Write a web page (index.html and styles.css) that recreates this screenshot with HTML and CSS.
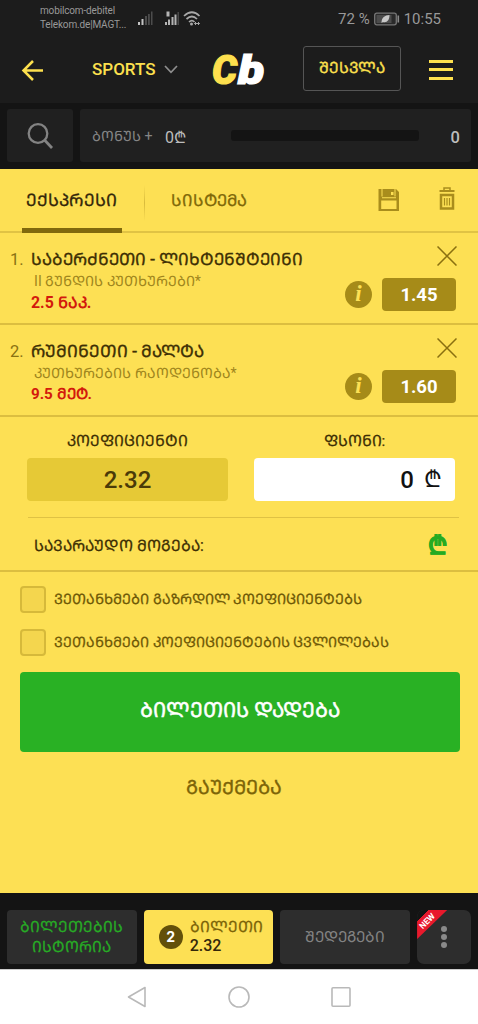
FILE: index.html
```html
<!DOCTYPE html>
<html lang="ka">
<head>
<meta charset="utf-8">
<title>Cb</title>
<link rel="stylesheet" href="styles.css">
</head>
<body>
<div class="status">
  <div class="carrier">mobilcom-debitel<br>Telekom.de|MAGT...</div>
  <svg class="signals" width="66" height="20" viewBox="0 0 66 20">
    <g fill="#c4c4c4"><rect x="1" y="13" width="2" height="3"/><rect x="4.500" y="10" width="2" height="6"/></g>
    <g fill="#4c4c4c"><rect x="8" y="7" width="2" height="9"/><rect x="11" y="5" width="1.800" height="11"/><rect x="14" y="2.500" width="1.500" height="13.500"/></g>
    <g fill="#b4b4b4"><rect x="28" y="13" width="2" height="3"/><rect x="31" y="10.500" width="2" height="5.500"/><rect x="34.500" y="8" width="2" height="8"/><rect x="37.500" y="5.500" width="2" height="10.500"/><rect x="29.500" y="2.500" width="3" height="5"/></g>
    <rect x="40.500" y="3" width="1.500" height="13" fill="#484848"/>
    <g fill="none" stroke="#a8a8a8" stroke-width="1.700"><path d="M47 7Q55 -0.500 62.500 7"/><path d="M49.500 10Q55 5 60 10"/><path d="M52 13Q55 10.200 57.500 13"/></g>
    <circle cx="54.500" cy="15" r="1.500" fill="#a8a8a8"/><path d="M57.500 14.500h5M59 13l-1.500 1.500L59 16M61 13l1.500 1.500L61 16" stroke="#a8a8a8" fill="none"/>
  </svg>
  <div class="clock">
    <span>72 %</span>
    <svg width="26" height="14" viewBox="0 0 26 14"><rect x="0.700" y="1.200" width="21.600" height="11.600" rx="2" fill="#2a2a2a" stroke="#777" stroke-width="1.300"/><rect x="2.500" y="3" width="15" height="8" fill="#4c4c4c"/><path d="M7.500 11C7.500 5 11 3.500 15.500 3C15.500 8 13 11 9 10Z" fill="#c8c8c8"/><rect x="23.500" y="3.500" width="1.600" height="7" fill="#8a8a8a"/></svg>
    <span>10:55</span>
  </div>
</div>
<header class="header">
  <svg class="back" width="24" height="24" viewBox="0 0 24 24"><path d="M12 3L2.500 12.500L12 22M2.500 12.500H22" fill="none" stroke="#fde04e" stroke-width="2.500"/></svg>
  <div class="sports">SPORTS</div>
  <svg class="chev" width="14" height="9" viewBox="0 0 14 9"><path d="M1 1L7 7.300L13 1" fill="none" stroke="#8e8e8e" stroke-width="1.700"/></svg>
  <div class="logo"><span class="logo-c">C</span><span class="logo-b">b</span></div>
  <div class="login">ᲨᲔᲡᲕᲚᲐ</div>
  <div class="menu"><i></i><i></i><i></i></div>
</header>
<section class="bonus-bar">
  <div class="search"><svg width="26" height="26" viewBox="0 0 26 26"><circle cx="11" cy="10.500" r="9.300" fill="none" stroke="#838383" stroke-width="2.300"/><path d="M17.500 17L25 25" stroke="#838383" stroke-width="2.700"/></svg></div>
  <div class="bonus">
    <span class="bonus-label">ᲑᲝᲜᲣᲡ +</span><span class="bonus-sum">0₾</span><div class="progress"></div><span class="bonus-num">0</span>
  </div>
</section>
<main class="slip">
  <nav class="tabs">
    <div class="tab active">ᲔᲥᲡᲞᲠᲔᲡᲘ</div>
    <div class="tab-sep"></div>
    <div class="tab">ᲡᲘᲡᲢᲔᲛᲐ</div>
    <svg class="save" width="22" height="22" viewBox="0 0 22 22"><path fill="#a98d1c" fill-rule="evenodd" d="M0.500 0H18L21 3V22H0.500ZM3.200 11.500V20H18.500V11.500ZM4 9.300H18V8.300H4ZM3.500 0V7.500H4.500V0ZM16.500 0V7.500H17.500V0Z"/><rect x="13" y="3" width="2.500" height="3" fill="#fde054"/></svg>
    <svg class="trash" width="16" height="23" viewBox="0 0 16 23"><path fill="none" stroke="#a98d1c" stroke-width="1.500" d="M5 3V1H11V3"/><path stroke="#a98d1c" stroke-width="2" d="M0.500 4H15.500"/><rect x="2" y="8" width="12" height="13.500" fill="none" stroke="#a98d1c" stroke-width="2.500"/><path stroke="#a98d1c" stroke-width="1.200" d="M5.500 11V18.500M8 11V18.500M10.500 11V18.500"/></svg>
  </nav>
  <article class="bet">
    <div class="num">1.</div>
    <div class="info">
      <div class="match">ᲡᲐᲑᲔᲠᲫᲜᲔᲗᲘ - ᲚᲘᲮᲢᲔᲜᲨᲢᲔᲘᲜᲘ</div>
      <div class="market">II ᲒᲣᲜᲓᲘᲡ ᲙᲣᲗᲮᲣᲠᲔᲑᲘ*</div>
      <div class="pick">2.5 ᲜᲐᲙ.</div>
    </div>
    <div class="side">
      <svg class="close" width="20" height="20" viewBox="0 0 20 20"><path d="M0.500 0.500L19.500 19.500M19.500 0.500L0.500 19.500" stroke="#8a7010" stroke-width="1.500"/></svg>
      <div class="odds-row"><div class="i">i</div><div class="odds">1.45</div></div>
    </div>
  </article>
  <article class="bet">
    <div class="num">2.</div>
    <div class="info">
      <div class="match m2">ᲠᲣᲛᲘᲜᲔᲗᲘ - ᲛᲐᲚᲢᲐ</div>
      <div class="market">ᲙᲣᲗᲮᲣᲠᲔᲑᲘᲡ ᲠᲐᲝᲓᲔᲜᲝᲑᲐ*</div>
      <div class="pick p2">9.5 ᲛᲔᲢ.</div>
    </div>
    <div class="side">
      <svg class="close" width="20" height="20" viewBox="0 0 20 20"><path d="M0.500 0.500L19.500 19.500M19.500 0.500L0.500 19.500" stroke="#8a7010" stroke-width="1.500"/></svg>
      <div class="odds-row"><div class="i">i</div><div class="odds">1.60</div></div>
    </div>
  </article>
  <section class="totals">
    <div class="col"><div class="label">ᲙᲝᲔᲤᲘᲪᲘᲔᲜᲢᲘ</div><div class="box">2.32</div></div>
    <div class="col"><div class="label">ᲤᲡᲝᲜᲘ:</div><div class="box stake"><span>0</span><span class="lari">₾</span></div></div>
  </section>
  <section class="win"><span>ᲡᲐᲕᲐᲠᲐᲣᲓᲝ ᲛᲝᲒᲔᲑᲐ:</span><span class="win-sum">₾</span></section>
  <section class="agree">
    <div class="check"><i></i><span>ᲕᲔᲗᲐᲜᲮᲛᲔᲑᲘ ᲒᲐᲖᲠᲓᲘᲚ ᲙᲝᲔᲤᲘᲪᲘᲔᲜᲢᲔᲑᲡ</span></div>
    <div class="check c2"><i></i><span>ᲕᲔᲗᲐᲜᲮᲛᲔᲑᲘ ᲙᲝᲔᲤᲘᲪᲘᲔᲜᲢᲔᲑᲘᲡ ᲪᲕᲚᲘᲚᲔᲑᲐᲡ</span></div>
  </section>
  <div class="place">ᲑᲘᲚᲔᲗᲘᲡ ᲓᲐᲓᲔᲑᲐ</div>
  <div class="cancel">ᲒᲐᲣᲥᲛᲔᲑᲐ</div>
</main>
<footer class="bottom">
  <div class="btn history">ᲑᲘᲚᲔᲗᲔᲑᲘᲡ<br>ᲘᲡᲢᲝᲠᲘᲐ</div>
  <div class="btn ticket"><div class="count">2</div><div><div class="t-label">ᲑᲘᲚᲔᲗᲘ</div><div class="t-odds">2.32</div></div></div>
  <div class="btn results">ᲨᲔᲓᲔᲒᲔᲑᲘ</div>
  <div class="btn more">
    <div class="dots"><i></i><i></i><i></i></div>
    <div class="ribbon"><span>NEW</span></div>
  </div>
</footer>
<div class="sysnav">
  <svg width="20" height="22" viewBox="0 0 20 22"><path d="M18 1.500V20.500L1.500 11Z" fill="none" stroke="#b9b9b9" stroke-width="1.600" stroke-linejoin="round"/></svg>
  <svg width="22" height="22" viewBox="0 0 22 22"><circle cx="11" cy="11" r="10" fill="none" stroke="#b9b9b9" stroke-width="1.600"/></svg>
  <svg width="20" height="22" viewBox="0 0 20 22"><rect x="1" y="1.800" width="18" height="18.400" rx="1" fill="none" stroke="#b9b9b9" stroke-width="1.600"/></svg>
</div>
</body>
</html>
```
FILE: styles.css
```css
* { box-sizing: border-box; }
body { margin: 0; width: 478px; height: 1024px; overflow: hidden; background: #1c1c1c; font-family: Roboto, "DejaVu Sans", sans-serif; display: flex; flex-direction: column; white-space: nowrap; }
svg { display: block; flex: none; }
i { display: block; }

.status { height: 36px; flex: none; display: flex; padding: 4px 37px 0 40px; color: #999; }
.carrier { font-size: 10px; line-height: 14px; width: 97px; letter-spacing: -0.150px; }
.signals { margin-top: 5px; }
.clock { margin-left: auto; height: 29px; display: flex; align-items: center; gap: 4px; font-size: 15px; }

.header { height: 67px; flex: none; display: flex; align-items: center; padding: 0 25px 0 21px; }
.sports { margin-left: 47px; width: 66px; color: #fde04e; font-size: 17px; font-weight: 500; line-height: 20px; padding-bottom: 2px; }
.chev { margin-left: 6px; }
.logo { margin-left: 34px; width: 91px; display: flex; font-size: 41px; line-height: 46px; font-style: italic; font-weight: 900; -webkit-text-stroke: 1.200px currentColor; }
.logo-c { color: #fde04e; width: 26px; transform-origin: left; transform: scaleX(0.960); }
.logo-b { color: #fff; transform-origin: left; transform: scaleX(1.180); }
.login { width: 98px; height: 45px; margin-top: -3px; border: 1px solid #555; border-radius: 3px; color: #fde04e; font-size: 15.500px; line-height: 43px; text-align: center; -webkit-text-stroke: 0.350px currentColor; }
.menu { margin-left: auto; width: 24px; height: 20px; display: flex; flex-direction: column; justify-content: space-between; }
.menu i { height: 3px; background: #fde04e; }

.bonus-bar { height: 66px; flex: none; background: #141414; display: flex; gap: 7px; padding: 6px 7px 7px; }
.search { width: 66px; background: #202020; border-radius: 3px; display: flex; align-items: center; justify-content: center; }
.bonus { flex: 1; background: #202020; border-radius: 3px; display: flex; align-items: center; padding: 0 11px 0 12px; }
.bonus-label { font-size: 14.200px; color: #858585; width: 73px; }
.bonus-sum { font-size: 16px; color: #bdbdbd; width: 66px; padding-top: 2px; }
.progress { width: 188px; height: 11px; border-radius: 3px; background: #141414; }
.bonus-num { margin-left: auto; font-size: 16.500px; color: #bdbdbd; font-weight: 500; padding-top: 3px; }

.slip { height: 724px; flex: none; background: #fde054; color: #4a3a04; }
.tabs { height: 64px; display: flex; align-items: center; padding-left: 22px; border-bottom: 2px solid #e0c344; }
.tab { height: 62px; line-height: 63px; font-size: 16.500px; color: #806808; -webkit-text-stroke: 0.300px currentColor; }
.tab.active { width: 100px; height: 64px; align-self: flex-start; text-align: center; font-size: 17.200px; color: #33270a; border-bottom: 5px solid #80690d; margin-right: 0; padding-right: 1px; }
.tab-sep { width: 1px; height: 36px; margin: 6px 26px 0 22px; background: linear-gradient(#fde054, #d8bb3c, #fde054); }
.save { margin-left: 131px; margin-top: -1px; }
.trash { margin-left: 39px; margin-top: -3px; }

.bet { height: 92px; border-bottom: 2px solid #dcbe40; display: flex; padding: 14px 22px 0 10px; }
.num { width: 21px; font-size: 16.500px; line-height: 25px; color: #8a7212; }
.match { font-size: 16.800px; line-height: 24px; color: #3d2f04; -webkit-text-stroke: 0.350px currentColor; }
.match.m2 { font-size: 17.050px; }
.market { font-size: 14.250px; line-height: 21px; color: #a0861d; padding-left: 3px; }
.pick { font-size: 15.850px; line-height: 21px; font-weight: 700; color: #d31a0c; }
.pick.p2 { font-size: 15.200px; }
.side { margin-left: auto; display: flex; flex-direction: column; align-items: flex-end; }
.close { margin: -1px -1px 0 0; }
.odds-row { display: flex; align-items: center; gap: 10px; margin-top: 12px; }
.i { width: 27px; height: 27px; border-radius: 50%; background: #a68b18; color: #fde054; font: italic 700 23px/26px "Liberation Serif", serif; text-align: center; }
.odds { width: 74px; height: 33px; border-radius: 4px; background: #a68b18; color: #fff; font-weight: 700; font-size: 18.500px; line-height: 34px; text-align: center; }

.totals { height: 100px; display: flex; gap: 26px; margin: 0 23px 0 27px; }
.col { flex: 1; padding-top: 12px; text-align: center; }
.label { font-size: 15.550px; line-height: 25px; height: 29px; color: #3d2f04; -webkit-text-stroke: 0.250px currentColor; }
.box { height: 43px; border-radius: 4px; background: #e6c936; font-size: 24px; font-weight: 500; line-height: 44px; color: #4a3a08; }
.stake { background: #fff; color: #111; display: flex; justify-content: flex-end; padding-right: 13px; gap: 10px; }
.lari { font-size: 23px; }
.win { height: 53px; margin: 0 19px 0 28px; border-top: 1px solid #dfc244; display: flex; justify-content: space-between; padding: 0 12px 0 6px; font-size: 15.700px; line-height: 56px; color: #3d2f04; -webkit-text-stroke: 0.250px currentColor; }
.win-sum { color: #25ab22; font-size: 25px; font-weight: 700; -webkit-text-stroke: 0.600px currentColor; }

.agree { height: 102px; border-top: 2px solid #dcbe40; padding: 14px 20px 0; display: flex; flex-direction: column; gap: 16px; }
.check { display: flex; align-items: center; gap: 8px; font-size: 14.420px; line-height: 27px; color: #6e5806; -webkit-text-stroke: 0.250px currentColor; }
.check.c2 { font-size: 14.270px; }
.check i { width: 26px; height: 27px; border: 2px solid #d6b93a; border-radius: 4px; background: #f4d64e; }
.place { margin: 0 18px 0 20px; height: 80px; border-radius: 4px; background: #29b124; color: #fff; font-size: 20.700px; line-height: 76px; text-align: center; -webkit-text-stroke: 0.500px currentColor; }
.cancel { margin-top: 20px; padding-right: 10px; font-size: 19.600px; line-height: 32px; color: #7c6408; text-align: center; -webkit-text-stroke: 0.350px currentColor; }

.bottom { height: 76px; flex: none; background: #141414; padding: 17px 7px 5px; display: flex; gap: 7px; }
.btn { width: 130px; border-radius: 4px; background: #2d2d2d; height: 54px; }
.history { color: #27aa25; font-size: 15.450px; line-height: 20px; padding-top: 7px; text-align: center; -webkit-text-stroke: 0.250px currentColor; }
.ticket { background: #fde054; display: flex; padding: 7px 0 0 15px; gap: 7px; }
.count { width: 24px; height: 24px; margin-top: 8px; border-radius: 50%; background: #63500a; color: #fff; font: 700 14px/24px Inter, sans-serif; text-align: center; }
.t-label { font-size: 15.500px; line-height: 20px; color: #7c6408; -webkit-text-stroke: 0.250px currentColor; }
.t-odds { font-weight: 500; font-size: 16px; line-height: 18px; color: #33270a; }
.results { color: #838383; font-size: 15.210px; line-height: 54px; text-align: center; }
.more { width: 54px; border-radius: 7px; position: relative; overflow: hidden; display: flex; align-items: center; justify-content: center; }
.dots { display: flex; flex-direction: column; gap: 2px; }
.dots i { width: 6px; height: 6px; border-radius: 50%; background: #8a8a8a; }
.ribbon { position: absolute; left: 0; top: 0; width: 30px; height: 30px; background: linear-gradient(135deg, #141414 8px, #e8192c 8px); clip-path: polygon(0 0, 30px 0, 0 29px); }
.ribbon span { position: absolute; left: -1px; top: 6px; width: 22px; text-align: center; color: #fff; font-size: 8.500px; font-weight: 700; line-height: 10px; transform: rotate(-45deg); }

.sysnav { flex: 1; background: #fff; border-top: 1px solid #ccc; display: flex; justify-content: center; align-items: center; gap: 81px; }
```
